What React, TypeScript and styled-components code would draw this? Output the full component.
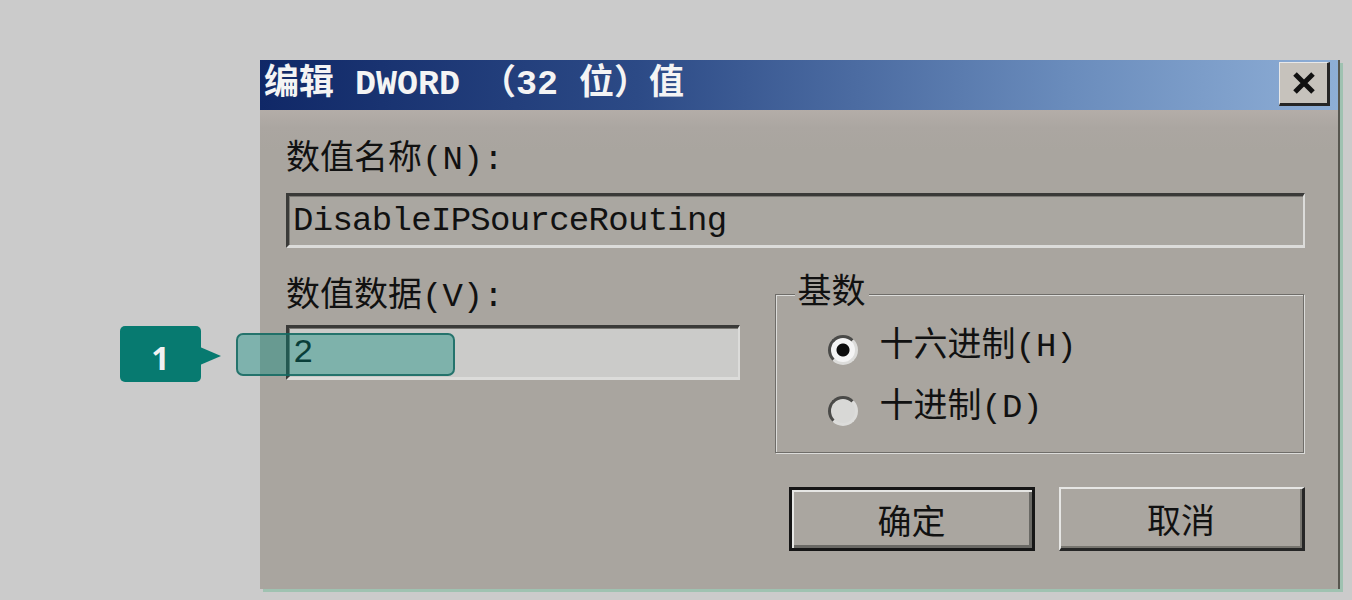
import React from "react";
import styled, { createGlobalStyle } from "styled-components";

const GlobalStyle = createGlobalStyle`
  html, body {
    margin: 0;
    background: #cbcbcb;
    overflow: hidden;
  }
`;

const Page = styled.div`
  position: relative;
  width: 1352px;
  height: 600px;
  box-sizing: border-box;
  padding: 60px 0 0 260px;
  font-family: "Liberation Mono", "Noto Sans CJK SC", monospace;
  font-size: 34px;
  color: #111;
`;

const Dialog = styled.div`
  width: 1080px;
  height: 529px;
  box-sizing: border-box;
  display: flex;
  flex-direction: column;
  background: #a9a59f;
  border-right: 2px solid #57564f;
  box-shadow: 3px 3px 0 #9fc2b1;
`;

const TitleBar = styled.div`
  height: 50px;
  display: flex;
  align-items: flex-start;
  padding-left: 4px;
  background: linear-gradient(90deg, #102867 0%, #2c4a86 35%, #6a8cbc 75%, #8eaed6 100%);
`;

const Title = styled.div`
  align-self: center;
  color: #f4f4f4;
  font-weight: bold;
  font-size: 35px;
  line-height: 1;
  white-space: pre;
`;

const CloseButton = styled.div`
  margin: 2px 8px 0 auto;
  width: 51px;
  height: 44px;
  box-sizing: border-box;
  display: flex;
  align-items: center;
  justify-content: center;
  background: #c6c2bc;
  border-top: 1px solid #e8e8e8;
  border-left: 1px solid #e8e8e8;
  border-right: 3px solid #252525;
  border-bottom: 3px solid #252525;
`;

const Body = styled.div`
  flex: 1;
  padding: 32px 33px 0 26px;
  background: linear-gradient(180deg, #b4ada8 0px, #aba6a1 18px, #a9a59f 40px);
`;

const Label = styled.div`
  line-height: 36px;
  white-space: pre;
`;

const Field = styled.div<{ $light?: boolean }>`
  height: 55px;
  box-sizing: border-box;
  display: flex;
  align-items: center;
  padding-left: 4px;
  letter-spacing: -0.7px;
  background: ${(p) => (p.$light ? "#cbcbc9" : "#aaa7a1")};
  border-top: 3px solid #3a3a38;
  border-left: 3px solid #3a3a38;
  border-right: 2px solid #dcdcda;
  border-bottom: 3px solid #dcdcda;
  box-shadow: inset 1px 1px 0 #7a7873;
  margin-top: ${(p) => (p.$light ? "10px" : "15px")};
  line-height: 1;
`;

const Row = styled.div`
  display: flex;
  margin-top: 31px;
`;

const LeftColumn = styled.div`
  width: 454px;
`;

const RightColumn = styled.div`
  margin-left: 35px;
  width: 531px;
`;

const Group = styled.fieldset`
  margin: 0;
  padding: 0;
  width: 529px;
  box-sizing: border-box;
  border: 1px solid #6f6d69;
  box-shadow: inset 1px 1px 0 #dcdcda, 1px 1px 0 #dcdcda;
  min-inline-size: 0;
`;

const Legend = styled.legend`
  margin-left: 19px;
  padding: 0 3px;
  line-height: 30px;
  background: #a9a59f;
`;

const RadioList = styled.div`
  display: flex;
  flex-direction: column;
  gap: 21px;
  padding: 21px 0 21px 52px;
`;

const RadioRow = styled.div`
  height: 40px;
  display: flex;
  align-items: center;
  gap: 22px;
  white-space: pre;
`;

const RadioText = styled.span`
  line-height: 1;
  padding-bottom: 6px;
`;

const RadioDot = styled.span<{ $checked?: boolean }>`
  width: 30px;
  height: 30px;
  box-sizing: border-box;
  border-radius: 50%;
  border: 3px solid;
  border-color: #4a4a48 #dcdcda #dcdcda #4a4a48;
  background: ${(p) =>
    p.$checked
      ? "radial-gradient(circle, #0c0c0c 0 6px, #f4f4f4 7px)"
      : "#d8d8d6"};
`;

const Buttons = styled.div`
  display: flex;
  gap: 24px;
  margin-top: 34px;
  padding-left: 14px;
`;

const Button = styled.div<{ $default?: boolean }>`
  width: 246px;
  height: 64px;
  box-sizing: border-box;
  display: flex;
  align-items: center;
  justify-content: center;
  background: #aaa6a0;
  ${(p) =>
    p.$default
      ? `
    border: 3px solid #161616;
    box-shadow: inset 2px 2px 0 #e6e6e4, inset -3px -3px 0 #6a6965;
  `
      : `
    border-top: 2px solid #e6e6e4;
    border-left: 2px solid #e6e6e4;
    border-right: 3px solid #262626;
    border-bottom: 3px solid #262626;
    box-shadow: inset -2px -2px 0 #77756f;
  `}
`;

const Badge = styled.div`
  position: absolute;
  left: 120px;
  top: 326px;
  width: 81px;
  height: 56px;
  border-radius: 5px;
  background: #077a70;
  color: #f2f2f2;
  font-family: "Open Sans", "Liberation Sans", sans-serif;
  font-weight: bold;
  font-size: 32px;
  display: flex;
  align-items: center;
  justify-content: center;
  padding-top: 6px;
  box-sizing: border-box;

  &::after {
    content: "";
    position: absolute;
    left: 80px;
    top: 21px;
    border-top: 9px solid transparent;
    border-bottom: 9px solid transparent;
    border-left: 21px solid #077a70;
  }
`;

const Highlight = styled.div`
  position: absolute;
  left: 236px;
  top: 333px;
  width: 219px;
  height: 43px;
  box-sizing: border-box;
  border-radius: 7px;
  border: 2px solid rgba(20, 105, 96, 0.85);
  background: rgba(0, 136, 123, 0.38);
`;

export default function App() {
  return (
    <Page>
      <GlobalStyle />
      <Dialog>
        <TitleBar>
          <Title>编辑 DWORD （32 位）值</Title>
          <CloseButton>
            <svg width="24" height="22" viewBox="0 0 24 22">
              <path d="M3 2 L21 20 M21 2 L3 20" stroke="#111" strokeWidth="5" />
            </svg>
          </CloseButton>
        </TitleBar>
        <Body>
          <Label>数值名称(N):</Label>
          <Field>DisableIPSourceRouting</Field>
          <Row>
            <LeftColumn>
              <Label>数值数据(V):</Label>
              <Field $light>2</Field>
            </LeftColumn>
            <RightColumn>
              <Group>
                <Legend>基数</Legend>
                <RadioList>
                  <RadioRow>
                    <RadioDot $checked />
                    <RadioText>十六进制(H)</RadioText>
                  </RadioRow>
                  <RadioRow>
                    <RadioDot />
                    <RadioText>十进制(D)</RadioText>
                  </RadioRow>
                </RadioList>
              </Group>
              <Buttons>
                <Button $default>确定</Button>
                <Button>取消</Button>
              </Buttons>
            </RightColumn>
          </Row>
        </Body>
      </Dialog>
      <Badge>1</Badge>
      <Highlight />
    </Page>
  );
}
